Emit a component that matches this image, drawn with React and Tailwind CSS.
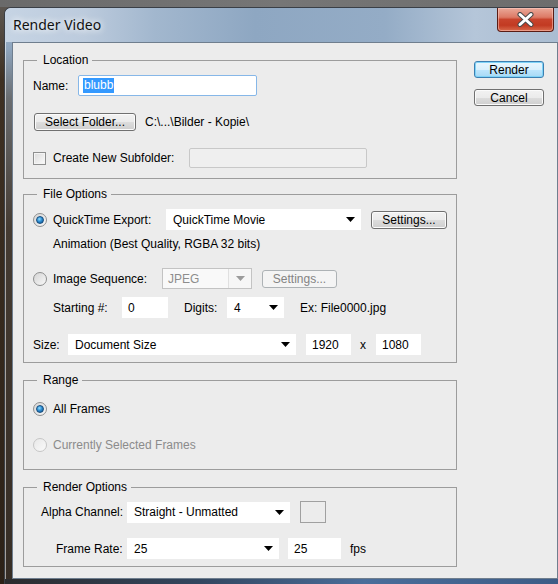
import React from "react";

const Arrow = ({ color = "#000" }) => (
  <svg width="9" height="5" viewBox="0 0 9 5" className="shrink-0">
    <path d="M0 0H9L4.5 5Z" fill={color} />
  </svg>
);

const Dropdown = ({ w, text }) => (
  <div className={`${w} h-[21px] bg-white flex items-center justify-between pl-[7px] pr-[6px] shrink-0`}>
    <span className="whitespace-nowrap">{text}</span>
    <Arrow />
  </div>
);

const TextBox = ({ w, text }) => (
  <div className={`${w} h-[21px] bg-white flex items-center pl-[6px] shrink-0`}>
    <span>{text}</span>
  </div>
);

const Button = ({ w, h = "h-[18px]", children, variant = "normal" }) => {
  const styles = {
    normal:
      "border-[#707070] text-black bg-[linear-gradient(to_bottom,#f2f2f2_0%,#ebebeb_50%,#dddddd_50%,#cfcfcf_100%)] shadow-[inset_0_0_0_1px_#fbfbfb]",
    primary:
      "border-[#3c7fb1] text-black bg-[linear-gradient(to_bottom,#eaf6fd_0%,#d9f0fc_50%,#bee6fd_50%,#a7d9f5_100%)] shadow-[inset_0_0_0_1px_#7fd3f7]",
    disabled: "border-[#adb2b5] text-[#838383] bg-[#f4f4f4]",
  };
  return (
    <div
      className={`${w} ${h} border rounded-[3px] flex items-center justify-center shrink-0 ${styles[variant]}`}
    >
      <span className="leading-none">{children}</span>
    </div>
  );
};

const Radio = ({ checked, disabled }) => (
  <div
    className={`w-[14px] h-[14px] rounded-full border flex items-center justify-center shrink-0 ${
      disabled
        ? "border-[#c6c6c6] bg-[linear-gradient(135deg,#e8e8e8,#fafafa)]"
        : "border-[#8e8f8f] bg-[linear-gradient(135deg,#d5d5d5,#f8f8f8)]"
    }`}
  >
    {checked && (
      <div className="w-[8px] h-[8px] rounded-full bg-[radial-gradient(circle_at_40%_35%,#8fdcff_0%,#2f8fd3_45%,#0d4a86_100%)] border border-[#174d7d]" />
    )}
  </div>
);

const Group = ({ title, children, className = "" }) => (
  <fieldset className={`w-[434px] border border-[#9c9c9c] ${className}`}>
    <legend className="ml-[13px] pl-[6px] pr-[4px] leading-[15px] text-black">{title}</legend>
    {children}
  </fieldset>
);

export default function App() {
  return (
    <div className="w-[558px] h-[584px] overflow-hidden flex flex-col bg-[linear-gradient(to_bottom,#5f5a55_0px,#3e3022_80px,#2c2117_100%)] font-['Liberation_Sans',Arial,sans-serif] text-[12px] text-black">
      <div className="h-[7px] shrink-0 bg-[linear-gradient(to_right,#6a6a6a,#767676_50%,#6d6d6d)]" />
      <div className="flex flex-1 min-h-0">
        <div className="w-[4px] shrink-0" />
        {/* Window */}
        <div className="flex-1 flex flex-col rounded-tl-[7px] border-l border-t border-[#3a3f46] shadow-[inset_1px_1px_0_rgba(255,255,255,0.55)] overflow-hidden bg-[linear-gradient(to_bottom,#a9bcd3_0px,#8fa6bf_40px,#6a6d70_90px,#453b32_220px,#362d25_100%)]">
          {/* Title bar */}
          <div className="h-[34px] shrink-0 flex items-start justify-between bg-[linear-gradient(to_right,#c6d4e4_0px,#bccbdd_80px,#a2b7ce_150px,#8ea7c2_250px,#94acc6_380px,#b5c6d9_470px,#a9bcd1_558px)]">
            <div className="h-[33px] flex items-center pl-[8px]">
              <span className="font-['Noto_Sans',sans-serif] text-[14px] text-[#111] [text-shadow:0_0_6px_rgba(255,255,255,0.95),0_0_10px_rgba(255,255,255,0.8)]">
                Render Video
              </span>
            </div>
            <div className="w-[57px] h-[24px] mr-[4px] rounded-b-[4px] border border-t-0 border-[#5a1c14] bg-[linear-gradient(to_bottom,#eaa999_0%,#dd7a66_40%,#c8432c_50%,#c23a22_75%,#d86a4c_100%)] shadow-[inset_0_0_0_1px_rgba(255,210,200,0.5)] flex items-center justify-center">
              <svg width="17" height="15" viewBox="0 0 17 15">
                <path d="M3 2.5L14 12.5M14 2.5L3 12.5" stroke="#4a4a4a" strokeWidth="5" strokeLinecap="round" />
                <path d="M3 2.5L14 12.5M14 2.5L3 12.5" stroke="#ffffff" strokeWidth="3" strokeLinecap="round" />
              </svg>
            </div>
          </div>

          {/* Client area */}
          <div className="ml-[7px] h-[537px] shrink-0 border border-[#6f7e8e] bg-[#ececec] flex">
            {/* Left column */}
            <div className="pl-[10px] pt-[10px] flex flex-col">
              <Group title="Location">
                <div className="pl-[9px] pb-[10px] flex flex-col">
                  <div className="mt-[7px] h-[21px] flex items-center">
                    <span className="w-[45px]">Name:</span>
                    <div className="w-[179px] h-[21px] border border-[#86b7e8] rounded-[2px] bg-white flex items-center pl-[4px]">
                      <span className="bg-[#3399ff] text-white leading-[15px] px-[1px]">blubb</span>
                    </div>
                  </div>
                  <div className="mt-[17px] h-[18px] flex items-center">
                    <div className="ml-[1px]">
                      <Button w="w-[102px]">Select Folder...</Button>
                    </div>
                    <span className="ml-[9px]">C:\...\Bilder - Kopie\</span>
                  </div>
                  <div className="mt-[17px] h-[20px] flex items-center">
                    <div className="w-[13px] h-[13px] border border-[#8e8f8f] bg-[linear-gradient(135deg,#dadada,#fbfbfb)] shadow-[inset_0_0_0_1px_#f4f4f4] shrink-0" />
                    <span className="ml-[7px] w-[136px]">Create New Subfolder:</span>
                    <div className="w-[178px] h-[20px] border border-[#c8c8c8] rounded-[2px] bg-[#efefef]" />
                  </div>
                </div>
              </Group>

              <Group title="File Options" className="mt-[8px]">
                <div className="pl-[9px] pb-[7px] flex flex-col">
                  <div className="mt-[7px] h-[21px] flex items-center">
                    <Radio checked />
                    <span className="ml-[6px] w-[113px]">QuickTime Export:</span>
                    <Dropdown w="w-[195px]" text="QuickTime Movie" />
                    <div className="ml-[10px]">
                      <Button w="w-[76px]">Settings...</Button>
                    </div>
                  </div>
                  <div className="mt-[7px] h-[14px] flex items-center pl-[20px]">
                    Animation (Best Quality, RGBA 32 bits)
                  </div>
                  <div className="mt-[17px] h-[21px] flex items-center">
                    <Radio />
                    <span className="ml-[6px] w-[109px]">Image Sequence:</span>
                    <div className="w-[90px] h-[21px] border border-[#c3c3c3] bg-[#f6f6f6] flex items-center justify-between shrink-0">
                      <div className="w-[66px] h-[19px] border-r border-[#e0e0e0] bg-[#f9f9f9] flex items-center pl-[5px] text-[#8d8d8d]">
                        JPEG
                      </div>
                      <div className="flex-1 flex justify-center">
                        <Arrow color="#9b9b9b" />
                      </div>
                    </div>
                    <div className="ml-[10px]">
                      <Button w="w-[75px]" variant="disabled">Settings...</Button>
                    </div>
                  </div>
                  <div className="mt-[8px] h-[21px] flex items-center pl-[20px]">
                    <span className="w-[69px]">Starting #:</span>
                    <TextBox w="w-[46px]" text="0" />
                    <span className="ml-[16px] w-[43px]">Digits:</span>
                    <Dropdown w="w-[57px]" text="4" />
                    <span className="ml-[16px]">Ex: File0000.jpg</span>
                  </div>
                  <div className="mt-[16px] h-[21px] flex items-center">
                    <span className="w-[35px]">Size:</span>
                    <Dropdown w="w-[228px]" text="Document Size" />
                    <div className="ml-[10px]">
                      <TextBox w="w-[45px]" text="1920" />
                    </div>
                    <span className="ml-[9px] w-[16px]">x</span>
                    <TextBox w="w-[45px]" text="1080" />
                  </div>
                </div>
              </Group>

              <Group title="Range" className="mt-[10px]">
                <div className="pl-[9px] pb-[16px] flex flex-col">
                  <div className="mt-[13px] h-[16px] flex items-center">
                    <Radio checked />
                    <span className="ml-[6px]">All Frames</span>
                  </div>
                  <div className="mt-[20px] h-[16px] flex items-center">
                    <Radio disabled />
                    <span className="ml-[6px] text-[#8b8b8b]">Currently Selected Frames</span>
                  </div>
                </div>
              </Group>

              <Group title="Render Options" className="mt-[10px]">
                <div className="pb-[7px] flex flex-col">
                  <div className="mt-[6px] h-[22px] flex items-center">
                    <span className="w-[103px] pl-[17px] whitespace-nowrap">Alpha Channel:</span>
                    <Dropdown w="w-[163px]" text="Straight - Unmatted" />
                    <div className="ml-[10px] w-[26px] h-[22px] border border-[#a0a0a0] bg-[#ececec]" />
                  </div>
                  <div className="mt-[15px] h-[21px] flex items-center">
                    <span className="w-[103px] pl-[32px] whitespace-nowrap">Frame Rate:</span>
                    <Dropdown w="w-[152px]" text="25" />
                    <div className="ml-[9px]">
                      <TextBox w="w-[53px]" text="25" />
                    </div>
                    <span className="ml-[9px]">fps</span>
                  </div>
                </div>
              </Group>
            </div>

            {/* Right column */}
            <div className="ml-[17px] pt-[18px] flex flex-col">
              <Button w="w-[70px]" h="h-[17px]" variant="primary">Render</Button>
              <div className="mt-[11px]">
                <Button w="w-[70px]" h="h-[17px]">Cancel</Button>
              </div>
            </div>
          </div>

          {/* Bottom frame */}
          <div className="flex-1 bg-[linear-gradient(to_right,#2b2b2d_0%,#33465f_35%,#4a6d9a_65%,#3d5c86_100%)]" />
        </div>
      </div>
    </div>
  );
}
